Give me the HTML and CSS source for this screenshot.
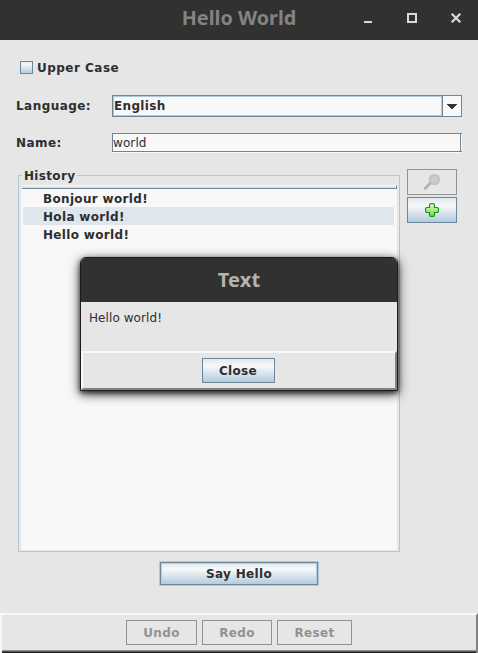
FILE: index.html
```html
<!DOCTYPE html>
<html lang="en">
<head>
<meta charset="utf-8">
<title>Hello World</title>
<link rel="stylesheet" href="styles.css">
</head>
<body>
<div class="window">
  <header class="titlebar">
    <h1 class="title">Hello World</h1>
    <div class="controls">
      <svg width="12" height="12" viewBox="0 0 12 12"><path d="M2 9h8v2H2z" fill="#dadad8"/></svg>
      <svg width="12" height="12" viewBox="0 0 12 12"><path d="M2 2h8v8H2z" fill="none" stroke="#dadad8" stroke-width="2"/></svg>
      <svg width="12" height="12" viewBox="0 0 12 12"><path d="M1.7 1.7l8.6 8.6M10.3 1.7l-8.6 8.6" stroke="#dadad8" stroke-width="2.2"/></svg>
    </div>
  </header>
  <main class="content">
    <label class="check"><span class="box"></span><span class="check-text">Upper Case</span></label>
    <div class="row row-language">
      <span class="label language">Language:</span>
      <div class="combo">
        <div class="combo-value"><span class="english">English</span></div>
        <div class="combo-arrow"><svg width="10" height="5" viewBox="0 0 10 5" shape-rendering="crispEdges"><path d="M0 0h10v1H9v1H8v1H7v1H6v1H4V4H3V3H2V2H1V1H0z" fill="#333"/></svg></div>
      </div>
    </div>
    <div class="row row-name">
      <span class="label name">Name:</span>
      <div class="field"><span>world</span></div>
    </div>
    <div class="history-row">
      <section class="history">
        <h2 class="legend">History</h2>
        <div class="list-head"></div>
        <ul class="list">
          <li>Bonjour world!</li>
          <li class="selected">Hola world!</li>
          <li>Hello world!</li>
        </ul>
      </section>
      <div class="side">
        <div class="button icon disabled"><svg width="18" height="18" viewBox="0 0 18 18"><path d="M2.3 15.2L7.5 10" stroke="#b3b3b3" stroke-width="3" stroke-linecap="round"/><circle cx="11.5" cy="6.5" r="4.9" fill="#cacaca" stroke="#bcbcbc" stroke-width="1.2"/><path d="M9 8.3c0-3 2-4 4-4" fill="none" stroke="#d5d5d5"/></svg></div>
        <div class="button icon"><svg width="14" height="14" viewBox="0 0 14 14"><defs><linearGradient id="g" x2="0" y2="1"><stop stop-color="#e9f9dd"/><stop offset="1" stop-color="#71cf3c"/></linearGradient></defs><path d="M5.5.5h3l1 1v3h3l1 1v3l-1 1h-3v3l-1 1h-3l-1-1v-3h-3l-1-1v-3l1-1h3v-3z" fill="url(#g)" stroke="#08a008" stroke-width="1.1"/></svg></div>
      </div>
    </div>
    <div class="say-row"><div class="button say">Say Hello</div></div>
  </main>
  <footer class="footer">
    <div class="button disabled undo">Undo</div>
    <div class="button disabled redo">Redo</div>
    <div class="button disabled reset">Reset</div>
  </footer>
  <div class="dialog">
    <h2 class="dialog-title">Text</h2>
    <p class="dialog-text">Hello world!</p>
    <div class="dialog-footer"><div class="button close">Close</div></div>
  </div>
</div>
</body>
</html>
```
FILE: styles.css
```css
* { box-sizing: border-box; }
body { margin: 0; background: #e6e6e6; color: #2e2e30; font: bold 12px/18px "DejaVu Sans", sans-serif; letter-spacing: .33px; }
h1, h2, p, ul { margin: 0; padding: 0; }
svg { display: block; }
.window { position: relative; width: 478px; height: 653px; overflow: hidden; display: flex; flex-direction: column; white-space: nowrap; }
.titlebar { height: 40px; flex: none; background: #313131; display: grid; grid-template-columns: 1fr auto 1fr; align-items: center; }
.title { grid-column: 2; color: #858381; font: bold 19.8px/36px "Noto Sans", sans-serif; letter-spacing: 0; height: 40px; }
.controls { display: flex; gap: 32px; justify-content: flex-end; padding: 0 16px 4px 0; }
.content { flex: 1; padding: 18px 16px 0; }
.check { display: flex; align-items: center; height: 20px; padding-left: 4px; gap: 4px; letter-spacing: .48px; }
.box { width: 13px; height: 13px; margin-top: -1px; border: 1px solid #6f8698; background: linear-gradient(#e3ebf2, #f0f4f7 25%, #b8cddd); }
.row { display: flex; align-items: center; }
.row-language { height: 22px; margin-top: 17px; }
.row-name { height: 20px; margin-top: 15px; }
.label { width: 96px; letter-spacing: .45px; }
.name { padding-top: 1px; }
.combo { width: 350px; height: 22px; display: flex; border: 1px solid #6f8698; background: #f8f8f8; }
.combo-value { flex: 1; border: 1px solid #b0c8dc; }
.combo-arrow { width: 19px; border-left: 1px solid #6f8698; display: flex; align-items: center; justify-content: center; }
.field { width: 350px; height: 19px; border: 1px solid #6f8698; border-right: 0; background: #f8f8f8; box-shadow: inset -1px 0 #f8f8f8, inset -2px 0 #6f8698, 0 1px #f8f8f8; font-weight: normal; letter-spacing: .1px; line-height: 18px; }
.history-row { display: flex; height: 383px; margin-top: 17px; padding-left: 2px; }
.history { width: 382px; height: 377px; margin-top: 6px; border: 1px solid #b0c8dc; padding: 0 2px 2px; }
.legend { width: 55px; height: 18px; margin: -9px 0 0 1px; padding-left: 2px; background: #e6e6e6; font: inherit; line-height: 18px; }
.list-head { height: 4px; margin-left: 1px; border-top: 1px solid #f8f8f8; border-bottom: 1px solid #6f8698; border-right: 1px solid #6f8698; }
.list { height: 361px; background: #f8f8f8; list-style: none; padding: 0 3px 0 2px; }
.list li { height: 18px; padding-left: 20px; line-height: 20px; }
.list .selected { background: #dfe7ee; }
.side { margin-left: 7px; display: flex; flex-direction: column; gap: 2px; }
.button { height: 25px; border: 1px solid #6f8698; background: linear-gradient(#dfe8f0, #f8f8f8 30%, #b4cbe0); display: flex; align-items: center; justify-content: center; }
.icon { width: 50px; height: 26px; }
.disabled { background: #e6e6e6; border-color: #929292; color: #929292; }
.say-row { display: flex; padding-left: 144px; margin-top: 10px; }
.say { width: 158px; height: 23px; box-shadow: 0 0 0 1px #b0c8dc, inset 0 0 0 1px #b8cddd; }
.footer { height: 40px; flex: none; display: flex; justify-content: center; gap: 5px; padding-top: 5px; border: 2px solid; border-color: #f8f8f8 #828282 #828282 #f8f8f8; border-bottom: 0; box-shadow: inset 0 -1px #231f20, inset 0 -2px #555, inset 0 -3px #929292; }
.undo { width: 71px; }
.redo { width: 70px; }
.reset { width: 75px; }
.dialog { position: absolute; left: 80px; top: 257px; width: 318px; height: 134px; border: 1px solid #1c1c1c; border-radius: 6px 6px 0 0; background: #e6e6e6; box-shadow: 0 3px 12px rgba(0,0,0,.75), 0 2px 5px rgba(0,0,0,.6); display: flex; flex-direction: column; }
.dialog-title { height: 44px; border-radius: 5px 5px 0 0; background: #313131; color: #b7b2ad; text-align: center; font: bold 20px/44px "Noto Sans", sans-serif; letter-spacing: .2px; }
.dialog-text { flex: 1; padding: 7px 8px; font-weight: normal; letter-spacing: .08px; }
.dialog-footer { height: 39px; display: flex; justify-content: center; padding: 5px 1px 0 0; border: 2px solid; border-color: #f8f8f8 #828282 #828282 #f8f8f8; }
.close { width: 73px; margin-right: 1px; }
```
